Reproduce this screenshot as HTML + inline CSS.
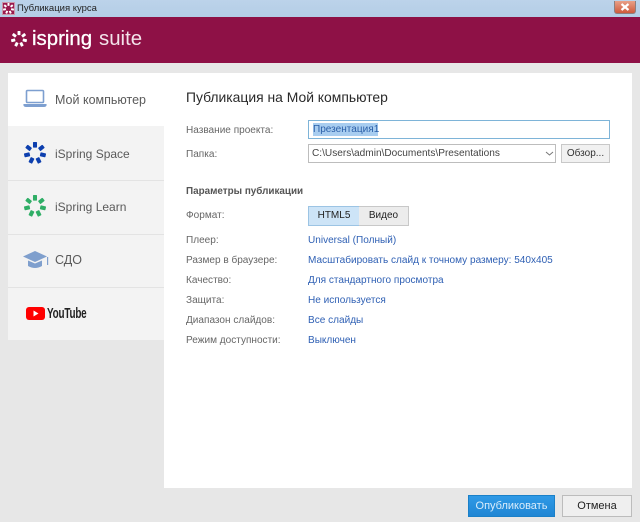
<!DOCTYPE html>
<html><head><meta charset="utf-8">
<style>
html,body{margin:0;padding:0}
body{width:640px;height:522px;overflow:hidden;position:relative;background:#e7e7e7;font-family:"Liberation Sans","Noto Sans CJK SC",sans-serif;font-size:11px;color:#5a5a5a}
.a{position:absolute;white-space:nowrap}
.l{position:absolute;left:186px;white-space:nowrap;font-size:10.05px;line-height:14px;color:#666}
.v{position:absolute;left:308px;white-space:nowrap;font-size:10.05px;line-height:14px;color:#2f60b4}
.nav{position:absolute;left:55px;white-space:nowrap;font-size:12px;line-height:16px;color:#5a5a5a}
.sep{position:absolute;left:8px;width:156px;height:1px;background:#e3e3e3}
</style></head><body>
<svg width="0" height="0" style="position:absolute"><defs><g id="sp"><rect x="-2.200" y="-12" width="4.400" height="6.200" rx=".8"/><rect x="-2.200" y="-12" width="4.400" height="6.200" rx=".8" transform="rotate(51.430)"/><rect x="-2.200" y="-12" width="4.400" height="6.200" rx=".8" transform="rotate(102.860)"/><rect x="-2.200" y="-12" width="4.400" height="6.200" rx=".8" transform="rotate(154.290)"/><rect x="-2.200" y="-12" width="4.400" height="6.200" rx=".8" transform="rotate(205.710)"/><rect x="-2.200" y="-12" width="4.400" height="6.200" rx=".8" transform="rotate(257.140)"/><rect x="-2.200" y="-12" width="4.400" height="6.200" rx=".8" transform="rotate(308.570)"/></g></defs></svg>
<div class="a" style="left:0;top:0;width:640px;height:17px;background:linear-gradient(#bcd3ea,#b4cde6)"></div>
<div class="a" style="left:2px;top:2px;width:11px;height:11px;background:#9a1a4e;border:1px solid #c9a"></div>
<svg class="a" style="left:3px;top:3px" width="11" height="11" viewBox="-12 -12 24 24" fill="#fff"><use href="#sp"/></svg>
<div class="a" style="left:17px;top:1px;font-size:9.500px;line-height:15px;color:#222">Публикация курса</div>
<div class="a" style="left:614px;top:1px;width:20px;height:12px;border:1px solid #8d7f80;border-top:0;border-radius:0 0 3px 3px;background:linear-gradient(#e8a088,#cf5a3c)"></div>
<svg class="a" style="left:620px;top:3px" width="10" height="8"><path d="M1.500 1 L8.500 7 M8.500 1 L1.500 7" stroke="#fff" stroke-width="2.200"/></svg>

<div class="a" style="left:0;top:17px;width:640px;height:46px;background:#8e1146"></div>
<svg class="a" style="left:11px;top:31px" width="16" height="16" viewBox="-12 -12 24 24" fill="#fff"><use href="#sp"/></svg>
<div class="a" style="left:32px;top:27px;font-size:20.400px;line-height:25px;color:#fff;-webkit-text-stroke:.3px #fff">ispring</div>
<div class="a" style="left:99px;top:27px;font-size:20.400px;line-height:25px;color:#f3e3ea">suite</div>

<div class="a" style="left:8px;top:73px;width:156px;height:267px;background:#f3f3f3"></div>
<div class="a" style="left:8px;top:73px;width:156px;height:53px;background:#fff"></div>
<div class="a" style="left:164px;top:73px;width:468px;height:415px;background:#fff"></div>
<div class="sep" style="top:180px"></div>
<div class="sep" style="top:234px"></div>
<div class="sep" style="top:287px"></div>

<svg class="a" style="left:23px;top:89px" width="25" height="19"><rect x="3.500" y="1.500" width="17" height="12" rx="1" fill="none" stroke="#7d9fd0" stroke-width="1.600"/><path d="M1 15 H23 Q24 15 23.500 16.500 Q23 18 21 18 H3 Q1 18 .5 16.500 Q0 15 1 15Z" fill="#7d9fd0"/></svg>
<div class="nav" style="top:92px;font-size:12.500px">Мой компьютер</div>

<svg class="a" style="left:24px;top:142px" width="22" height="22" viewBox="-12 -12 24 24" fill="#0d3fae"><use href="#sp"/></svg>
<div class="nav" style="top:146px">iSpring Space</div>

<svg class="a" style="left:24px;top:195px" width="22" height="22" viewBox="-12 -12 24 24" fill="#2fae66"><use href="#sp"/></svg>
<div class="nav" style="top:199px">iSpring Learn</div>

<svg class="a" style="left:22px;top:250px" width="27" height="20"><path d="M13 1 L25 6.500 L13 12 L1 6.500Z" fill="#7f9fcd"/><path d="M6 10.500 L13 13.500 L20 10.500 V16 Q13 20 6 16Z" fill="#7f9fcd"/><rect x="25" y="7" width="1.200" height="8" fill="#7f9fcd"/></svg>
<div class="nav" style="top:252px;font-size:12.500px">СДО</div>

<div class="a" style="left:26px;top:307px;width:19px;height:13px;background:#f00;border-radius:3px"></div>
<svg class="a" style="left:26px;top:307px" width="19" height="13"><path d="M7.500 3.500 L12.500 6.500 L7.500 9.500Z" fill="#fff"/></svg>
<div class="a" style="left:47px;top:305px;font-size:15px;line-height:17px;color:#222;font-weight:bold;letter-spacing:-.3px;transform:scaleX(.66);transform-origin:0 0">YouTube</div>

<div class="a" style="left:186px;top:88px;font-size:13.900px;line-height:18px;color:#2a2a2a">Публикация на Мой компьютер</div>

<div class="l" style="top:124px">Название проекта:</div>
<div class="a" style="left:308px;top:120px;width:300px;height:17px;border:1px solid #7eb4d8"></div>
<div class="a" style="left:313px;top:123px;width:65px;height:13px;background:#a8cdf0"></div>
<div class="a" style="left:313px;top:123px;font-size:10.050px;line-height:14px;color:#2b5fa8">Презентация1</div>

<div class="l" style="top:148px">Папка:</div>
<div class="a" style="left:308px;top:144px;width:246px;height:17px;border:1px solid #bdbdbd;background:#fff"></div>
<div class="a" style="left:312px;top:147px;font-size:10.100px;line-height:14px;color:#444">C:\Users\admin\Documents\Presentations</div>
<svg class="a" style="left:545px;top:151px" width="9" height="6"><path d="M1 1 L4.500 4 L8 1" fill="none" stroke="#777" stroke-width="1"/></svg>
<div class="a" style="left:561px;top:144px;width:47px;height:17px;border:1px solid #c8c8c8;background:#f1f1f1;text-align:center;font-size:10px;line-height:17px;color:#333">Обзор...</div>

<div class="a" style="left:186px;top:185px;font-size:9.900px;line-height:14px;color:#555;font-weight:bold">Параметры публикации</div>

<div class="l" style="top:209px">Формат:</div>
<div class="a" style="left:308px;top:206px;width:50px;height:18px;border:1px solid #9cc4e4;background:#cde4f7;text-align:center;font-size:10px;line-height:18px;color:#222">HTML5</div>
<div class="a" style="left:359px;top:206px;width:49px;height:18px;border:1px solid #c8c8c8;border-left:0;background:#ececec;text-align:center;font-size:10px;line-height:18px;color:#222">Видео</div>

<div class="l" style="top:234px">Плеер:</div><div class="v" style="top:234px">Universal (Полный)</div>
<div class="l" style="top:254px">Размер в браузере:</div><div class="v" style="top:254px">Масштабировать слайд к точному размеру: 540x405</div>
<div class="l" style="top:274px">Качество:</div><div class="v" style="top:274px">Для стандартного просмотра</div>
<div class="l" style="top:294px">Защита:</div><div class="v" style="top:294px">Не используется</div>
<div class="l" style="top:314px">Диапазон слайдов:</div><div class="v" style="top:314px">Все слайды</div>
<div class="l" style="top:334px">Режим доступности:</div><div class="v" style="top:334px">Выключен</div>

<div class="a" style="left:468px;top:495px;width:85px;height:20px;border:1px solid #1a80c8;background:linear-gradient(#2f9ae6,#1f86d4);text-align:center;font-size:11px;line-height:20px;color:#d8ecfb">Опубликовать</div>
<div class="a" style="left:562px;top:495px;width:68px;height:20px;border:1px solid #bcbcbc;background:#efefef;text-align:center;font-size:11px;line-height:20px;color:#222">Отмена</div>
</body></html>
